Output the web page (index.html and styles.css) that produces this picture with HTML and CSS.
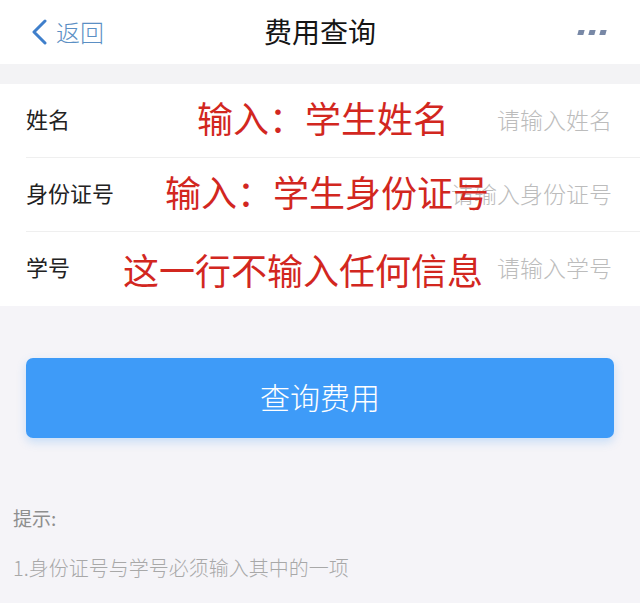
FILE: index.html
```html
<!DOCTYPE html>
<html lang="zh-CN">
<head>
  <meta charset="UTF-8">
  <meta name="viewport" content="width=device-width, initial-scale=1.0">
  <title>费用查询</title>
  <link rel="stylesheet" href="styles.css">
</head>
<body>
  <!-- Nav bar -->
  <div class="navbar">
    <div class="back">
      <svg class="chevron" viewBox="0 0 18 26" width="18" height="26" fill="none" stroke="currentColor" stroke-width="3" stroke-linecap="round" stroke-linejoin="round"><polyline points="15 2 4 13 15 24"></polyline></svg>
      <span>返回</span>
    </div>
    <div class="title">费用查询</div>
    <div class="more">
      <span class="dot"></span><span class="dot"></span><span class="dot"></span>
    </div>
  </div>

  <div class="gap-band"></div>

  <!-- Form -->
  <div class="form">
    <div class="row">
      <div class="label">姓名</div>
      <div class="placeholder">请输入姓名</div>
      <div class="note note-name">输入：学生姓名</div>
    </div>
    <div class="row">
      <div class="label">身份证号</div>
      <div class="placeholder">请输入身份证号</div>
      <div class="note note-id">输入：学生身份证号</div>
    </div>
    <div class="row">
      <div class="label">学号</div>
      <div class="placeholder">请输入学号</div>
      <div class="note note-no">这一行不输入任何信息</div>
    </div>
  </div>

  <div class="action">
    <button class="query-button">查询费用</button>
  </div>

  <div class="tips">
    <div class="tips-title">提示:</div>
    <div class="tips-item">1.身份证号与学号必须输入其中的一项</div>
  </div>
</body>
</html>
```

FILE: styles.css
```css
* {
  margin: 0;
  padding: 0;
  box-sizing: border-box;
  font-family: "Noto Sans CJK SC", "Noto Sans", sans-serif;
}

body {
  background-color: #f5f4f8;
  width: 640px;
  height: 603px;
  overflow: hidden;
}

.navbar {
  height: 64px;
  background-color: #ffffff;
  display: flex;
  align-items: center;
  justify-content: space-between;
  padding: 0 34px 0 30px;
  position: relative;
}

.back {
  display: flex;
  align-items: center;
  gap: 8px;
  color: #4a86c8;
  font-size: 24px;
  line-height: 1;
}

.back span {
  color: #5b8fc4;
  font-weight: 300;
}

.chevron {
  color: #3f7fcb;
}

.title {
  position: absolute;
  left: 0;
  right: 0;
  text-align: center;
  font-size: 28px;
  font-weight: 400;
  color: #151515;
  pointer-events: none;
  margin-top: -2px;
}

.more {
  display: flex;
  gap: 5px;
  align-items: center;
  margin-top: 0;
}

.dot {
  width: 6px;
  height: 5px;
  background-color: #7888a6;
  transform: skewX(-15deg);
}

.gap-band {
  height: 20px;
  background-color: #f3f3f5;
}

.form {
  background-color: #ffffff;
  padding-left: 26px;
}

.row {
  height: 74px;
  display: flex;
  align-items: center;
  justify-content: space-between;
  padding-right: 28px;
  border-bottom: 1px solid #efefef;
  position: relative;
}

.row:last-child {
  border-bottom: none;
}

.label {
  font-size: 22px;
  color: #222222;
  margin-top: -6px;
}

.placeholder {
  font-size: 23px;
  color: #bcbcbc;
  font-weight: 300;
  margin-top: -4px;
}

.note {
  position: absolute;
  font-size: 36px;
  color: #d2271f;
  line-height: 1;
  white-space: nowrap;
}

.note-name {
  left: 171px;
  top: 15px;
}

.note-id {
  left: 139px;
  top: 15px;
}

.note-no {
  left: 97px;
  top: 19px;
}

.action {
  padding: 52px 26px 0 26px;
}

.query-button {
  width: 100%;
  height: 80px;
  border: none;
  border-radius: 7px;
  background-color: #3e9bf8;
  color: #ffffff;
  font-size: 30px;
  font-weight: 300;
  padding-bottom: 5px;
  box-shadow: 0 4px 10px rgba(62, 155, 248, 0.25);
}

.tips {
  padding: 66px 14px 0 13px;
  display: flex;
  flex-direction: column;
  gap: 22px;
}

.tips-title {
  font-size: 19px;
  color: #8e8e8e;
}

.tips-item {
  font-size: 20px;
  color: #a8a8a8;
  font-weight: 300;
}
```
